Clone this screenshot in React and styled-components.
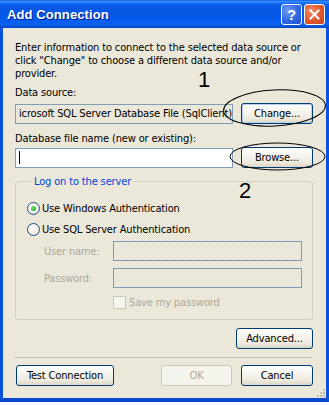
import React from 'react';
import styled, { createGlobalStyle } from 'styled-components';

const Global = createGlobalStyle`
  html, body { margin: 0; padding: 0; background: #ffffff; }
  body { width: 329px; height: 405px; overflow: hidden; }
  *, *::before, *::after { box-sizing: border-box; }
`;

const uiFont = `"DejaVu Sans Condensed", "DejaVu Sans", sans-serif`;

const dither = `
  background-color: #ece9d8;
  background-image: repeating-conic-gradient(#f4f2e9 0 25%, #e2ddc9 0 50%);
  background-size: 2px 2px;
`;

const Window = styled.div`
  position: relative;
  width: 329px;
  height: 402px;
  display: flex;
  flex-direction: column;
`;

const TitleBar = styled.div`
  flex: none;
  height: 28px;
  display: flex;
  align-items: center;
  padding: 0 4px 0 7px;
  background: linear-gradient(
    180deg,
    #0a5ae8 0%,
    #3a8cff 5%,
    #1f78fb 10%,
    #0a62ee 16%,
    #0657e4 30%,
    #0458e6 60%,
    #075ff2 75%,
    #0a61ee 86%,
    #0552d8 94%,
    #0845c4 100%
  );
`;

const Title = styled.div`
  flex: 1;
  color: #ffffff;
  font: bold 13px "Liberation Sans", Arial, sans-serif;
  letter-spacing: 0.1px;
  text-shadow: 1px 1px 0 #0a1a8c;
`;

const CaptionButtons = styled.div`
  display: flex;
  gap: 2px;
`;

const CaptionButton = styled.div`
  width: 21px;
  height: 21px;
  border: 1px solid #ffffff;
  border-radius: 3px;
  display: flex;
  align-items: center;
  justify-content: center;
  color: #ffffff;
  font: bold 15px "Liberation Sans", Arial, sans-serif;
  background: ${(p) =>
    p.$close
      ? 'radial-gradient(circle at 30% 30%, #f08a68 0%, #e2572c 55%, #c8401c 100%)'
      : 'radial-gradient(circle at 30% 30%, #6f9cf5 0%, #2f67e4 55%, #1c4fcf 100%)'};
`;

const Frame = styled.div`
  flex: 1;
  display: flex;
  min-width: 0;
  border-left: 3px solid #0a52dc;
  border-right: 3px solid #0a52dc;
  border-bottom: 4px solid #0847d0;
`;

const Body = styled.div`
  position: relative;
  flex: 1;
  min-width: 0;
  ${dither}
  padding: 13px 13px 0 12px;
  display: flex;
  flex-direction: column;
  font: 11px ${uiFont};
  letter-spacing: -0.15px;
  color: #000000;
`;

const Intro = styled.p`
  margin: 0;
  line-height: 13px;
  white-space: nowrap;
`;

const Label = styled.div`
  line-height: 13px;
  white-space: nowrap;
  margin-top: ${(p) => p.$mt || 0}px;
  color: ${(p) => (p.$disabled ? '#aca899' : '#000000')};
`;

const FieldRow = styled.div`
  display: flex;
  align-items: center;
  gap: 8px;
  margin-top: ${(p) => p.$mt || 0}px;
`;

const TextBox = styled.div`
  flex: ${(p) => (p.$grow ? 1 : 'none')};
  min-width: 0;
  height: 20px;
  border: 1px solid #7f9db9;
  ${(p) => (p.$white ? 'background: #ffffff;' : dither)}
  display: flex;
  align-items: center;
  padding: 0 2px 0 3px;
  overflow: hidden;
  white-space: nowrap;
  line-height: 13px;
`;

const Caret = styled.span`
  display: block;
  width: 1px;
  height: 13px;
  background: #000000;
`;

const Button = styled.button`
  flex: none;
  width: ${(p) => p.$w}px;
  height: 21px;
  padding: 0;
  font: 11px ${uiFont};
  letter-spacing: -0.15px;
  color: #000000;
  border: 1px solid #003c74;
  border-radius: 3px;
  background: linear-gradient(180deg, #ffffff 0%, #f6f5f0 35%, #eeebe0 75%, #dcd6c2 100%);
  box-shadow: ${(p) => (p.$hot ? 'inset 0 0 0 1px #b8cff5' : 'none')};
  &:disabled {
    border-color: #cac8bb;
    color: #aca899;
    background: #f4f3ec;
  }
`;

const Group = styled.fieldset`
  margin: 7px 0 0 0;
  padding: 10px 11px 10px 11px;
  min-inline-size: 0;
  min-width: 0;
  border: 1px solid #d0d0bf;
  border-radius: 3px;
`;

const Legend = styled.legend`
  margin-left: 5px;
  padding: 0 2px;
  color: #0046d5;
  line-height: 13px;
`;

const OptionRow = styled.label`
  height: 21px;
  display: flex;
  align-items: center;
  gap: 2px;
  white-space: nowrap;
`;

const Radio = styled.span`
  flex: none;
  width: 13px;
  height: 13px;
  border-radius: 50%;
  border: 1px solid #1c5180;
  background: radial-gradient(circle at 35% 35%, #ffffff 0%, #f2f1ea 50%, #d8d6cc 100%);
  display: flex;
  align-items: center;
  justify-content: center;
  &::after {
    content: '';
    width: 5px;
    height: 5px;
    border-radius: 50%;
    background: ${(p) => (p.$checked ? 'radial-gradient(circle at 40% 40%, #6ee06e, #21a121)' : 'transparent')};
  }
`;

const Credentials = styled.div`
  display: grid;
  grid-template-columns: 69px 189px;
  row-gap: 7px;
  margin: 1px 0 0 17px;
  align-items: center;
`;

const SaveRow = styled.div`
  display: flex;
  align-items: center;
  gap: 3px;
  margin: 8px 0 0 86px;
  height: 13px;
  color: #aca899;
  line-height: 13px;
  white-space: nowrap;
`;

const CheckBox = styled.span`
  flex: none;
  width: 13px;
  height: 13px;
  border: 1px solid #cac8bb;
  background: #f6f5ef;
`;

const RightRow = styled.div`
  display: flex;
  justify-content: flex-end;
  margin-top: 8px;
`;

const Separator = styled.div`
  height: 1px;
  margin-top: 8px;
  background: #c5c2b2;
`;

const ButtonBar = styled.div`
  display: flex;
  align-items: center;
  gap: 9px;
  margin-top: 7px;
  padding-left: 1px;
`;

const Spacer = styled.div`
  flex: 1;
`;

const Grip = styled.svg`
  position: absolute;
  right: 1px;
  bottom: 1px;
`;

const Overlay = styled.svg`
  position: absolute;
  left: 0;
  top: 0;
  pointer-events: none;
`;

const Marker = styled.span`
  position: absolute;
  left: ${(p) => p.$x}px;
  top: ${(p) => p.$y}px;
  font: 22px/22px "Liberation Sans", Arial, sans-serif;
  color: #000000;
  pointer-events: none;
`;

export default function App() {
  return (
    <>
      <Global />
      <Window>
        <TitleBar>
          <Title>Add Connection</Title>
          <CaptionButtons>
            <CaptionButton>?</CaptionButton>
            <CaptionButton $close>
              <svg width="11" height="11" viewBox="0 0 11 11">
                <path d="M1.5 1.5 L9.5 9.5 M9.5 1.5 L1.5 9.5" stroke="#ffffff" strokeWidth="2" strokeLinecap="square" />
              </svg>
            </CaptionButton>
          </CaptionButtons>
        </TitleBar>
        <Frame>
          <Body>
            <Intro>
              Enter information to connect to the selected data source or
              <br />
              click "Change" to choose a different data source and/or
              <br />
              provider.
            </Intro>
            <Label $mt={6}>Data source:</Label>
            <FieldRow $mt={4}>
              <TextBox $grow>icrosoft SQL Server Database File (SqlClient)</TextBox>
              <Button $w={72} $hot>Change...</Button>
            </FieldRow>
            <Label $mt={8}>Database file name (new or existing):</Label>
            <FieldRow $mt={2}>
              <TextBox $grow $white>
                <Caret />
              </TextBox>
              <Button $w={72}>Browse...</Button>
            </FieldRow>
            <Group>
              <Legend>Log on to the server</Legend>
              <OptionRow>
                <Radio $checked />
                Use Windows Authentication
              </OptionRow>
              <OptionRow>
                <Radio />
                Use SQL Server Authentication
              </OptionRow>
              <Credentials>
                <Label $disabled>User name:</Label>
                <TextBox />
                <Label $disabled>Password:</Label>
                <TextBox />
              </Credentials>
              <SaveRow>
                <CheckBox />
                Save my password
              </SaveRow>
            </Group>
            <RightRow>
              <Button $w={77}>Advanced...</Button>
            </RightRow>
            <Separator />
            <ButtonBar>
              <Button $w={98}>Test Connection</Button>
              <Spacer />
              <Button $w={71} disabled>
                OK
              </Button>
              <Button $w={72}>Cancel</Button>
            </ButtonBar>
            <Grip width="10" height="10" viewBox="0 0 10 10">
              <g fill="#c3bfae">
                <rect x="8" y="2" width="2" height="2" />
                <rect x="5" y="5" width="2" height="2" />
                <rect x="8" y="5" width="2" height="2" />
                <rect x="2" y="8" width="2" height="2" />
                <rect x="5" y="8" width="2" height="2" />
                <rect x="8" y="8" width="2" height="2" />
              </g>
            </Grip>
          </Body>
        </Frame>
        <Overlay width="329" height="405" viewBox="0 0 329 405">
          <ellipse cx="274.5" cy="108" rx="51" ry="18" fill="none" stroke="#000000" strokeWidth="1" transform="rotate(-3 274.5 108)" />
          <ellipse cx="277.5" cy="156.5" rx="47.5" ry="13.5" fill="none" stroke="#000000" strokeWidth="1" />
        </Overlay>
        <Marker $x={198} $y={69}>1</Marker>
        <Marker $x={239} $y={180}>2</Marker>
      </Window>
    </>
  );
}
